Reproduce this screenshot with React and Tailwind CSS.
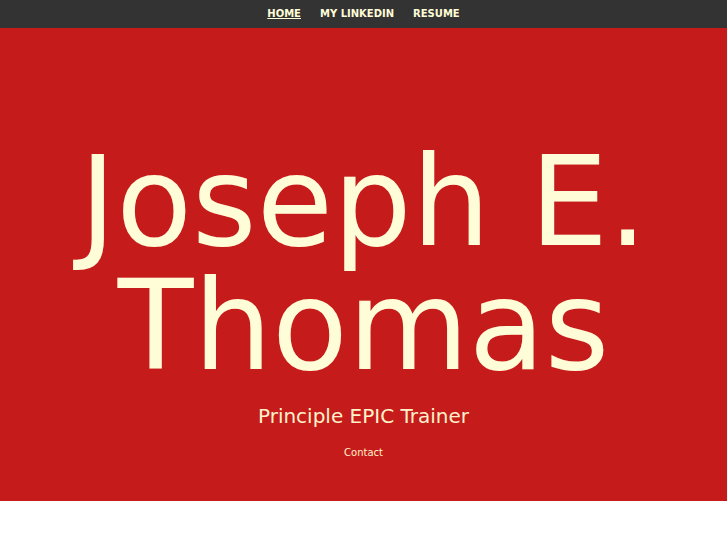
const navLinks = [
  { id: 'home', label: 'Home', href: '#home', active: true },
  { id: 'linkedin', label: 'My LinkedIn', href: '#linkedin', active: false },
  { id: 'resume', label: 'Resume', href: '#resume', active: false },
];

export default function App() {
  return (
    <div className="min-h-screen bg-white font-['DejaVu_Sans',sans-serif] text-[#fffdd8]">
      <nav className="flex h-7 items-center justify-center gap-[19px] bg-[#333333] text-[10px] leading-4 font-bold uppercase">
        {navLinks.map((link) => (
          <a key={link.id} href={link.href} className={link.active ? 'underline' : 'hover:underline'}>
            {link.label}
          </a>
        ))}
      </nav>

      {/* Hero */}
      <main className="flex flex-col items-center bg-[#c61b1b] px-5 pt-28 pb-10 text-center">
        <h1 className="text-[124px] leading-[124px]">Joseph E. Thomas</h1>
        <p className="mt-4 text-[20px] leading-6 text-[#fff2cb]">Principle EPIC Trainer</p>
        <a href="#contact" className="mt-[17px] text-[10px] leading-4 text-[#fff2cb]">
          Contact
        </a>
      </main>
    </div>
  );
}
